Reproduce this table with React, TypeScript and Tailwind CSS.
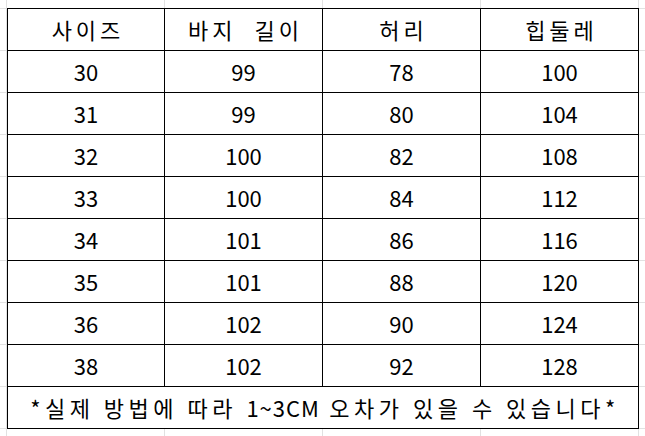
const rows = [
  ['30', '99', '78', '100'],
  ['31', '99', '80', '104'],
  ['32', '100', '82', '108'],
  ['33', '100', '84', '112'],
  ['34', '101', '86', '116'],
  ['35', '101', '88', '120'],
  ['36', '102', '90', '124'],
  ['38', '102', '92', '128'],
]

const headers = ['사이즈', '바지  길이', '허리', '힙둘레']

export default function App() {
  return (
    <div className="w-[645px] h-[436px] overflow-hidden bg-white bg-[linear-gradient(to_right,#e1e1e1_1px,transparent_1px),linear-gradient(to_bottom,#e1e1e1_1px,transparent_1px)] bg-size-[158px_42px] bg-position-[6px_8px] pl-[7px] pt-[8px] font-['Noto_Sans_CJK_KR',sans-serif] text-[22px] text-black">
      <div className="grid w-[632px] grid-cols-[157px_158px_158px_158px] border-l border-t border-black bg-white">
        {headers.map((h) => (
          <div
            key={h}
            className="flex h-[42px] items-center justify-center whitespace-pre border-b border-r border-black pl-[4px] tracking-[4px]"
          >
            {h}
          </div>
        ))}
        {rows.map((r) =>
          r.map((v, i) => (
            <div
              key={r[0] + '-' + i}
              className="flex h-[42px] items-center justify-center border-b border-r border-black"
            >
              {v}
            </div>
          ))
        )}
        <div className="col-span-4 flex h-[42px] items-center justify-center whitespace-pre border-b border-r border-black pl-[4px] tracking-[4.5px]">
          *실제 방법에 따라 <span className="tracking-[1px]">1~3CM</span> 오차가 있을 수 있습니다*
        </div>
      </div>
    </div>
  )
}
